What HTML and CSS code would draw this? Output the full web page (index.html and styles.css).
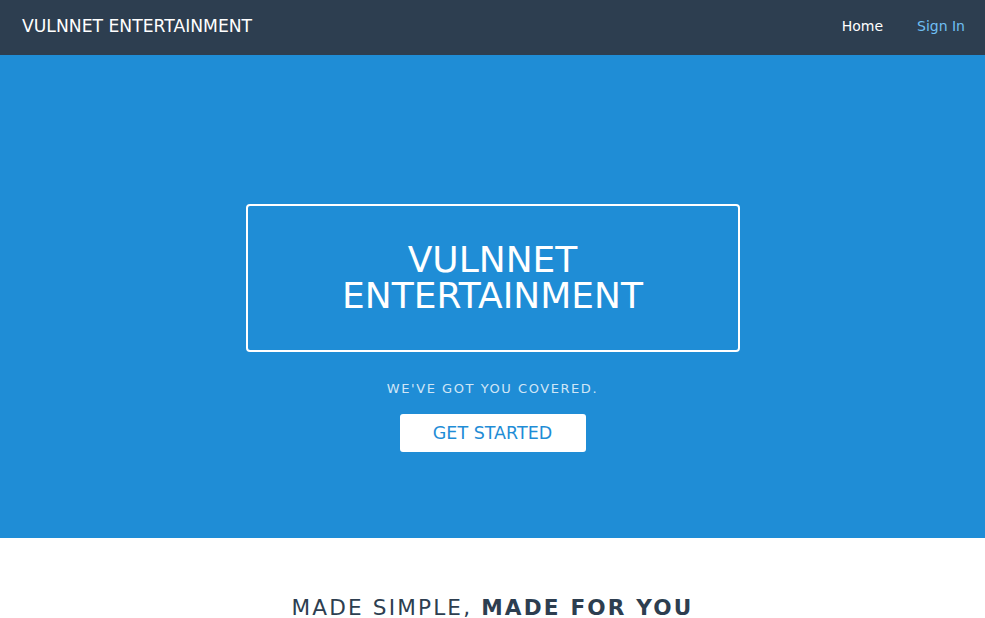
FILE: index.html
```
<!DOCTYPE html>
<html lang="en">
<head>
<meta charset="utf-8">
<title>VulnNet Entertainment</title>
<link rel="stylesheet" href="styles.css">
</head>
<body>
<header class="menu">
  <a class="brand" href="#">VULNNET ENTERTAINMENT</a>
  <nav class="links">
    <a class="link active" href="#">Home</a>
    <a class="link" href="#">Sign In</a>
  </nav>
</header>
<section class="splash">
  <h1 class="splash-head">VULNNET<br>ENTERTAINMENT</h1>
  <p class="splash-sub">We've got you covered.</p>
  <a class="btn" href="#">Get Started</a>
</section>
<section class="content">
  <h2 class="content-head">Made Simple, <b>Made for you</b></h2>
</section>
</body>
</html>
```
FILE: styles.css
```
html, body {
  margin: 0;
  padding: 0;
  font-family: "DejaVu Sans", sans-serif;
  background: #ffffff;
}
.menu {
  height: 55px;
  box-sizing: border-box;
  background: #2d3e50;
  display: flex;
  align-items: center;
  justify-content: space-between;
  padding: 0 0 3px 22px;
  box-shadow: 0 1px 1px rgba(0,0,0,0.1);
}
.brand {
  color: #ffffff;
  text-decoration: none;
  font-size: 17.2px;
}
.links {
  display: flex;
  align-items: center;
}
.link {
  color: #6fbef3;
  text-decoration: none;
  font-size: 14px;
  padding: 0 20px 0 14px;
}
.link.active {
  color: #ffffff;
}
.splash {
  height: 483px;
  background: #1f8dd6;
  box-sizing: border-box;
  padding-top: 149px;
  display: flex;
  flex-direction: column;
  align-items: center;
  text-transform: uppercase;
}
.splash-head {
  width: 490px;
  box-sizing: content-box;
  margin: 0;
  border: 2px solid #ffffff;
  border-radius: 4px;
  padding: 36px 0;
  color: #ffffff;
  font-weight: normal;
  font-size: 36px;
  line-height: 36px;
  text-align: center;
}
.splash-sub {
  margin: 29px 0 0;
  color: rgba(255,255,255,0.8);
  font-size: 13px;
  letter-spacing: 0.12em;
  line-height: 16px;
}
.btn {
  margin-top: 17px;
  width: 186px;
  height: 38px;
  display: flex;
  align-items: center;
  justify-content: center;
  background: #ffffff;
  color: #1f8dd6;
  border-radius: 3px;
  text-decoration: none;
  font-size: 17.5px;
}
.content {
  text-align: center;
  padding: 57px 0 0;
}
.content-head {
  margin: 0;
  color: #2d3e50;
  font-weight: normal;
  font-size: 21.6px;
  letter-spacing: 0.1em;
  text-transform: uppercase;
}
.content-head b {
  font-weight: bold;
}
```
